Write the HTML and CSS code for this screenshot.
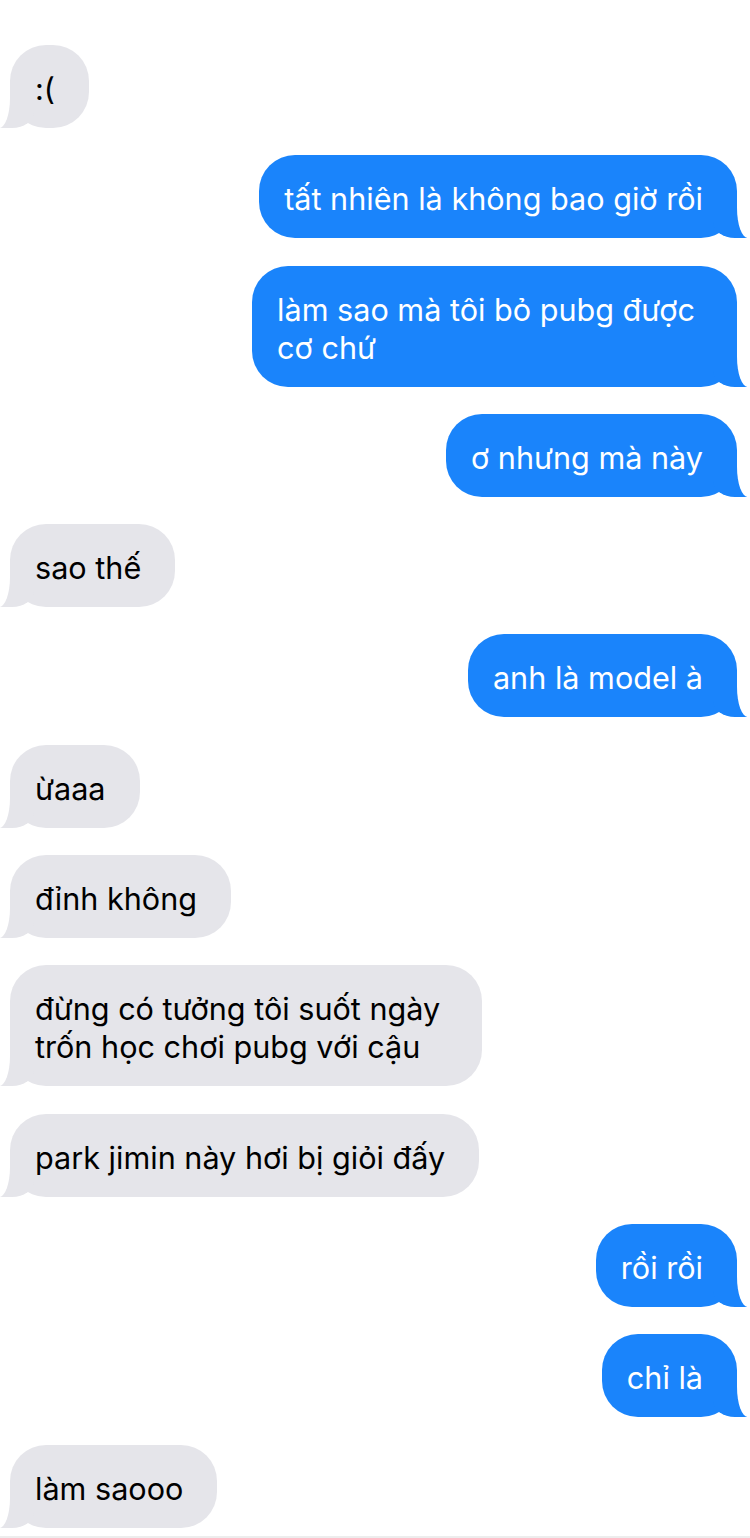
FILE: index.html
```html
<!DOCTYPE html>
<html lang="vi">
<head>
  <meta charset="UTF-8">
  <title>Tin nhắn</title>
  <meta name="viewport" content="width=device-width, initial-scale=1.0">
  <link rel="stylesheet" href="styles.css">
</head>
<body>
  <div class="thread">
    <div class="msg in">:(</div>
    <div class="msg out">tất nhiên là không bao giờ rồi</div>
    <div class="msg out multi">làm sao mà tôi bỏ pubg được<br>cơ chứ</div>
    <div class="msg out">ơ nhưng mà này</div>
    <div class="msg in">sao thế</div>
    <div class="msg out">anh là model à</div>
    <div class="msg in">ừaaa</div>
    <div class="msg in">đỉnh không</div>
    <div class="msg in multi">đừng có tưởng tôi suốt ngày<br>trốn học chơi pubg với cậu</div>
    <div class="msg in">park jimin này hơi bị giỏi đấy</div>
    <div class="msg out">rồi rồi</div>
    <div class="msg out">chỉ là</div>
    <div class="msg in">làm saooo</div>
  </div>
  <div class="bottom-line"></div>
</body>
</html>
```

FILE: styles.css
```css
body {
  margin: 0;
  padding: 0;
  background: #fff;
  font-family: Inter, 'Noto Sans', sans-serif;
  height: 1538px;
  overflow: hidden;
  position: relative;
}
.thread {
  display: flex;
  flex-direction: column;
  gap: 27.3px;
  padding: 45px 13px 0 10px;
}
.msg {
  position: relative;
  font-size: 30.6px;
  line-height: 38px;
  padding: 25px 34px 20px 25px;
  border-radius: 36px;
  white-space: nowrap;
}
.msg.multi {
  padding-right: 42px;
}
.msg.in {
  align-self: flex-start;
  background: #e5e5ea;
  color: #000;
}
.msg.out {
  align-self: flex-end;
  background: #1a84fb;
  color: #fff;
}
/* bubble tails */
.msg::before,
.msg::after {
  content: "";
  position: absolute;
  bottom: 0;
  height: 36px;
}
.msg.out::before {
  right: -10px;
  width: 34px;
  background: #1a84fb;
  border-bottom-left-radius: 22px 16px;
}
.msg.out::after {
  right: -30px;
  width: 30px;
  background: #fff;
  border-bottom-left-radius: 11px 30px;
}
.msg.in::before {
  left: -10px;
  width: 34px;
  background: #e5e5ea;
  border-bottom-right-radius: 22px 16px;
}
.msg.in::after {
  left: -30px;
  width: 30px;
  background: #fff;
  border-bottom-right-radius: 11px 30px;
}
.bottom-line {
  position: absolute;
  left: 0;
  right: 0;
  bottom: 0;
  height: 2px;
  background: #ededed;
}
```
